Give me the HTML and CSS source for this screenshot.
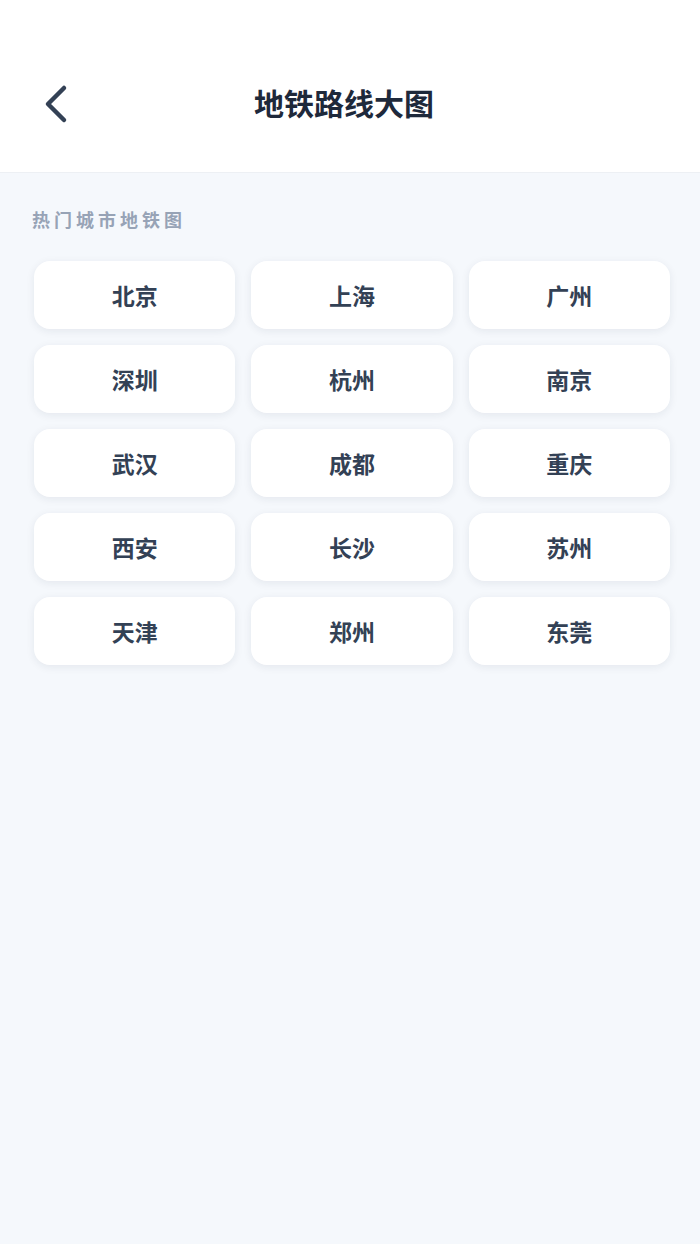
FILE: index.html
```html
<!DOCTYPE html>
<html lang="zh-CN">
<head>
  <meta charset="UTF-8">
  <title>地铁路线大图</title>
  <link rel="stylesheet" href="styles.css">
</head>
<body>
  <header class="top-bar">
    <div class="nav-row">
      <button class="back-btn" aria-label="返回">
        <svg width="28" height="40" viewBox="0 0 28 40">
          <path d="M22 4 L6 20 L22 36" fill="none" stroke="#334155" stroke-width="4.5" stroke-linecap="round" stroke-linejoin="round"/>
        </svg>
      </button>
      <h1 class="page-title">地铁路线大图</h1>
    </div>
  </header>

  <main class="content">
    <div class="section-label">热门城市地铁图</div>
    <div class="city-grid">
      <div class="city-card">北京</div>
      <div class="city-card">上海</div>
      <div class="city-card">广州</div>
      <div class="city-card">深圳</div>
      <div class="city-card">杭州</div>
      <div class="city-card">南京</div>
      <div class="city-card">武汉</div>
      <div class="city-card">成都</div>
      <div class="city-card">重庆</div>
      <div class="city-card">西安</div>
      <div class="city-card">长沙</div>
      <div class="city-card">苏州</div>
      <div class="city-card">天津</div>
      <div class="city-card">郑州</div>
      <div class="city-card">东莞</div>
    </div>
  </main>
</body>
</html>
```

FILE: styles.css
```css
html, body {
  margin: 0;
  padding: 0;
}
body {
  font-family: "Noto Sans CJK SC", "Noto Sans", sans-serif;
  background-color: #f5f8fc;
  min-height: 1244px;
}
.top-bar {
  background-color: #ffffff;
  height: 173px;
  box-sizing: border-box;
  padding-top: 66px;
  border-bottom: 1px solid #edf0f4;
}
.nav-row {
  position: relative;
  height: 72px;
  display: flex;
  align-items: center;
  justify-content: center;
}
.back-btn {
  position: absolute;
  left: 42px;
  top: 18px;
  border: none;
  background: none;
  padding: 0;
  width: 28px;
  height: 40px;
  cursor: pointer;
}
.page-title {
  margin: 0 12px 0 0;
  font-size: 30px;
  font-weight: 600;
  color: #1e293b;
}
.content {
  padding: 34px 30px 0 34px;
}
.section-label {
  margin-left: -2px;
  font-size: 18px;
  font-weight: 700;
  color: #97a3b6;
  letter-spacing: 4px;
  line-height: 24px;
  margin-bottom: 30px;
}
.city-grid {
  display: grid;
  grid-template-columns: repeat(3, 1fr);
  gap: 16px;
}
.city-card {
  height: 68px;
  background-color: #ffffff;
  border-radius: 16px;
  box-shadow: 0 2px 8px rgba(30, 41, 59, 0.08);
  display: flex;
  align-items: center;
  justify-content: center;
  font-size: 23px;
  font-weight: 600;
  color: #334155;
}
```
